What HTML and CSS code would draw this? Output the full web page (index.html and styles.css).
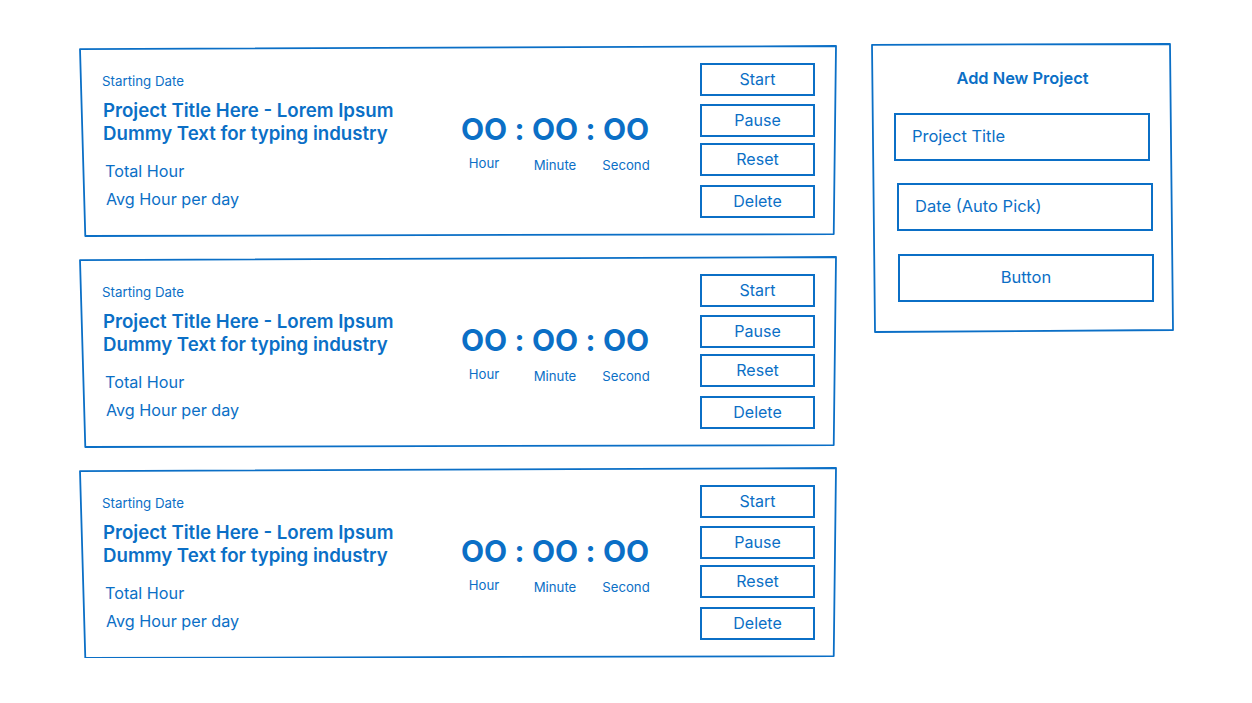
FILE: index.html
```html
<!DOCTYPE html>
<html lang="en">
<head>
<meta charset="utf-8">
<title>Projects</title>
<link rel="stylesheet" href="styles.css">
</head>
<body>
<main class="page">
  <section class="cards">
    <article class="card">
      <svg class="sketch" viewBox="0 0 100 100" preserveAspectRatio="none"><polygon points="0,1.6 100,0 99.7,99 0.7,100" vector-effect="non-scaling-stroke"/></svg>
      <div class="info">
        <div class="date">Starting Date</div>
        <h2 class="title">Project Title Here - Lorem Ipsum<br>Dummy Text for typing industry</h2>
        <div class="meta m1">Total Hour</div>
        <div class="meta m2">Avg Hour per day</div>
      </div>
      <div class="timer">
        <span class="num">OO</span><span class="colon">:</span><span class="num">OO</span><span class="colon">:</span><span class="num">OO</span>
        <span class="lbl hour">Hour</span><span></span><span class="lbl">Minute</span><span></span><span class="lbl">Second</span>
      </div>
      <div class="actions">
        <button class="btn b1">Start</button>
        <button class="btn b2">Pause</button>
        <button class="btn b3">Reset</button>
        <button class="btn b4">Delete</button>
      </div>
    </article>
    <article class="card">
      <svg class="sketch" viewBox="0 0 100 100" preserveAspectRatio="none"><polygon points="0,1.6 100,0 99.7,99 0.7,100" vector-effect="non-scaling-stroke"/></svg>
      <div class="info">
        <div class="date">Starting Date</div>
        <h2 class="title">Project Title Here - Lorem Ipsum<br>Dummy Text for typing industry</h2>
        <div class="meta m1">Total Hour</div>
        <div class="meta m2">Avg Hour per day</div>
      </div>
      <div class="timer">
        <span class="num">OO</span><span class="colon">:</span><span class="num">OO</span><span class="colon">:</span><span class="num">OO</span>
        <span class="lbl hour">Hour</span><span></span><span class="lbl">Minute</span><span></span><span class="lbl">Second</span>
      </div>
      <div class="actions">
        <button class="btn b1">Start</button>
        <button class="btn b2">Pause</button>
        <button class="btn b3">Reset</button>
        <button class="btn b4">Delete</button>
      </div>
    </article>
    <article class="card">
      <svg class="sketch" viewBox="0 0 100 100" preserveAspectRatio="none"><polygon points="0,1.6 100,0 99.7,99 0.7,100" vector-effect="non-scaling-stroke"/></svg>
      <div class="info">
        <div class="date">Starting Date</div>
        <h2 class="title">Project Title Here - Lorem Ipsum<br>Dummy Text for typing industry</h2>
        <div class="meta m1">Total Hour</div>
        <div class="meta m2">Avg Hour per day</div>
      </div>
      <div class="timer">
        <span class="num">OO</span><span class="colon">:</span><span class="num">OO</span><span class="colon">:</span><span class="num">OO</span>
        <span class="lbl hour">Hour</span><span></span><span class="lbl">Minute</span><span></span><span class="lbl">Second</span>
      </div>
      <div class="actions">
        <button class="btn b1">Start</button>
        <button class="btn b2">Pause</button>
        <button class="btn b3">Reset</button>
        <button class="btn b4">Delete</button>
      </div>
    </article>
  </section>

  <aside class="panel">
    <svg class="sketch" viewBox="0 0 100 100" preserveAspectRatio="none"><polygon points="0,0.3 99,0 100,99.3 1,100" vector-effect="non-scaling-stroke"/></svg>
    <h3 class="panel-title">Add New Project</h3>
    <div class="field f1">Project Title</div>
    <div class="field f2">Date (Auto Pick)</div>
    <button class="field submit">Button</button>
  </aside>
</main>
</body>
</html>
```

FILE: styles.css
```css
* { box-sizing: border-box; }
html, body { margin: 0; padding: 0; background: #fff; }
body {
  font-family: Inter, Roboto, "Liberation Sans", sans-serif;
  color: #0b6fc6;
}
.page {
  display: flex;
  align-items: flex-start;
  padding: 44px 0 0 80px;
}
.cards {
  display: flex;
  flex-direction: column;
  gap: 21px;
  margin-top: 2px;
}
.card {
  position: relative;
  width: 756px;
  height: 190px;
  display: flex;
  align-items: flex-start;
  padding: 17px 21px 0 22px;
}
.sketch {
  position: absolute;
  inset: 0;
  width: 100%;
  height: 100%;
  overflow: visible;
  pointer-events: none;
}
.sketch polygon {
  fill: none;
  stroke: #0b6fc6;
  stroke-width: 1.8;
  stroke-linejoin: round;
}
.info {
  width: 360px;
  margin-top: 10px;
}
.date {
  font-size: 13.3px;
  line-height: 16px;
}
.title {
  margin: 10px 0 0 1px;
  font-size: 18.65px;
  line-height: 23px;
  font-weight: 600;
}
.meta {
  font-size: 16.2px;
  line-height: 22px;
  padding-left: 3px;
}
.m1 { margin-top: 15px; }
.m2 { margin-top: 6px; padding-left: 4px; }

.timer {
  display: grid;
  grid-template-columns: 44px 27px 44px 27px 44px;
  justify-items: center;
  margin-top: 48px;
}
.num, .colon {
  font-size: 30px;
  line-height: 36px;
  font-weight: 700;
}
.lbl {
  font-size: 13.2px;
  line-height: 16px;
  margin-top: 10px;
  white-space: nowrap;
}
.lbl.hour { margin-top: 8px; }

.actions {
  margin-left: auto;
  display: flex;
  flex-direction: column;
  width: 115px;
}
.btn {
  height: 33px;
  border: 2px solid #0b6fc6;
  background: #fff;
  color: #0b6fc6;
  font-family: inherit;
  font-size: 16px;
  padding: 0 0 2px 0;
}
.b2 { margin-top: 8px; }
.b3 { margin-top: 6px; }
.b4 { margin-top: 9px; }

.panel {
  position: relative;
  width: 301px;
  height: 288px;
  margin-left: 36px;
  padding: 24px 22px 0 22px;
  display: flex;
  flex-direction: column;
}
.panel-title {
  margin: 0;
  text-align: center;
  font-size: 16.4px;
  line-height: 20px;
  font-weight: 600;
}
.field {
  height: 48px;
  width: 256px;
  border: 2px solid #0b6fc6;
  background: #fff;
  color: #0b6fc6;
  font-family: inherit;
  font-size: 16.5px;
  display: flex;
  align-items: center;
  padding: 0 0 2px 16px;
}
.f1 { margin-top: 25px; }
.f2 { margin-top: 22px; margin-left: 3px; }
.submit {
  margin-top: 23px;
  margin-left: 4px;
  justify-content: center;
  padding: 0 0 2px 0;
}
```
